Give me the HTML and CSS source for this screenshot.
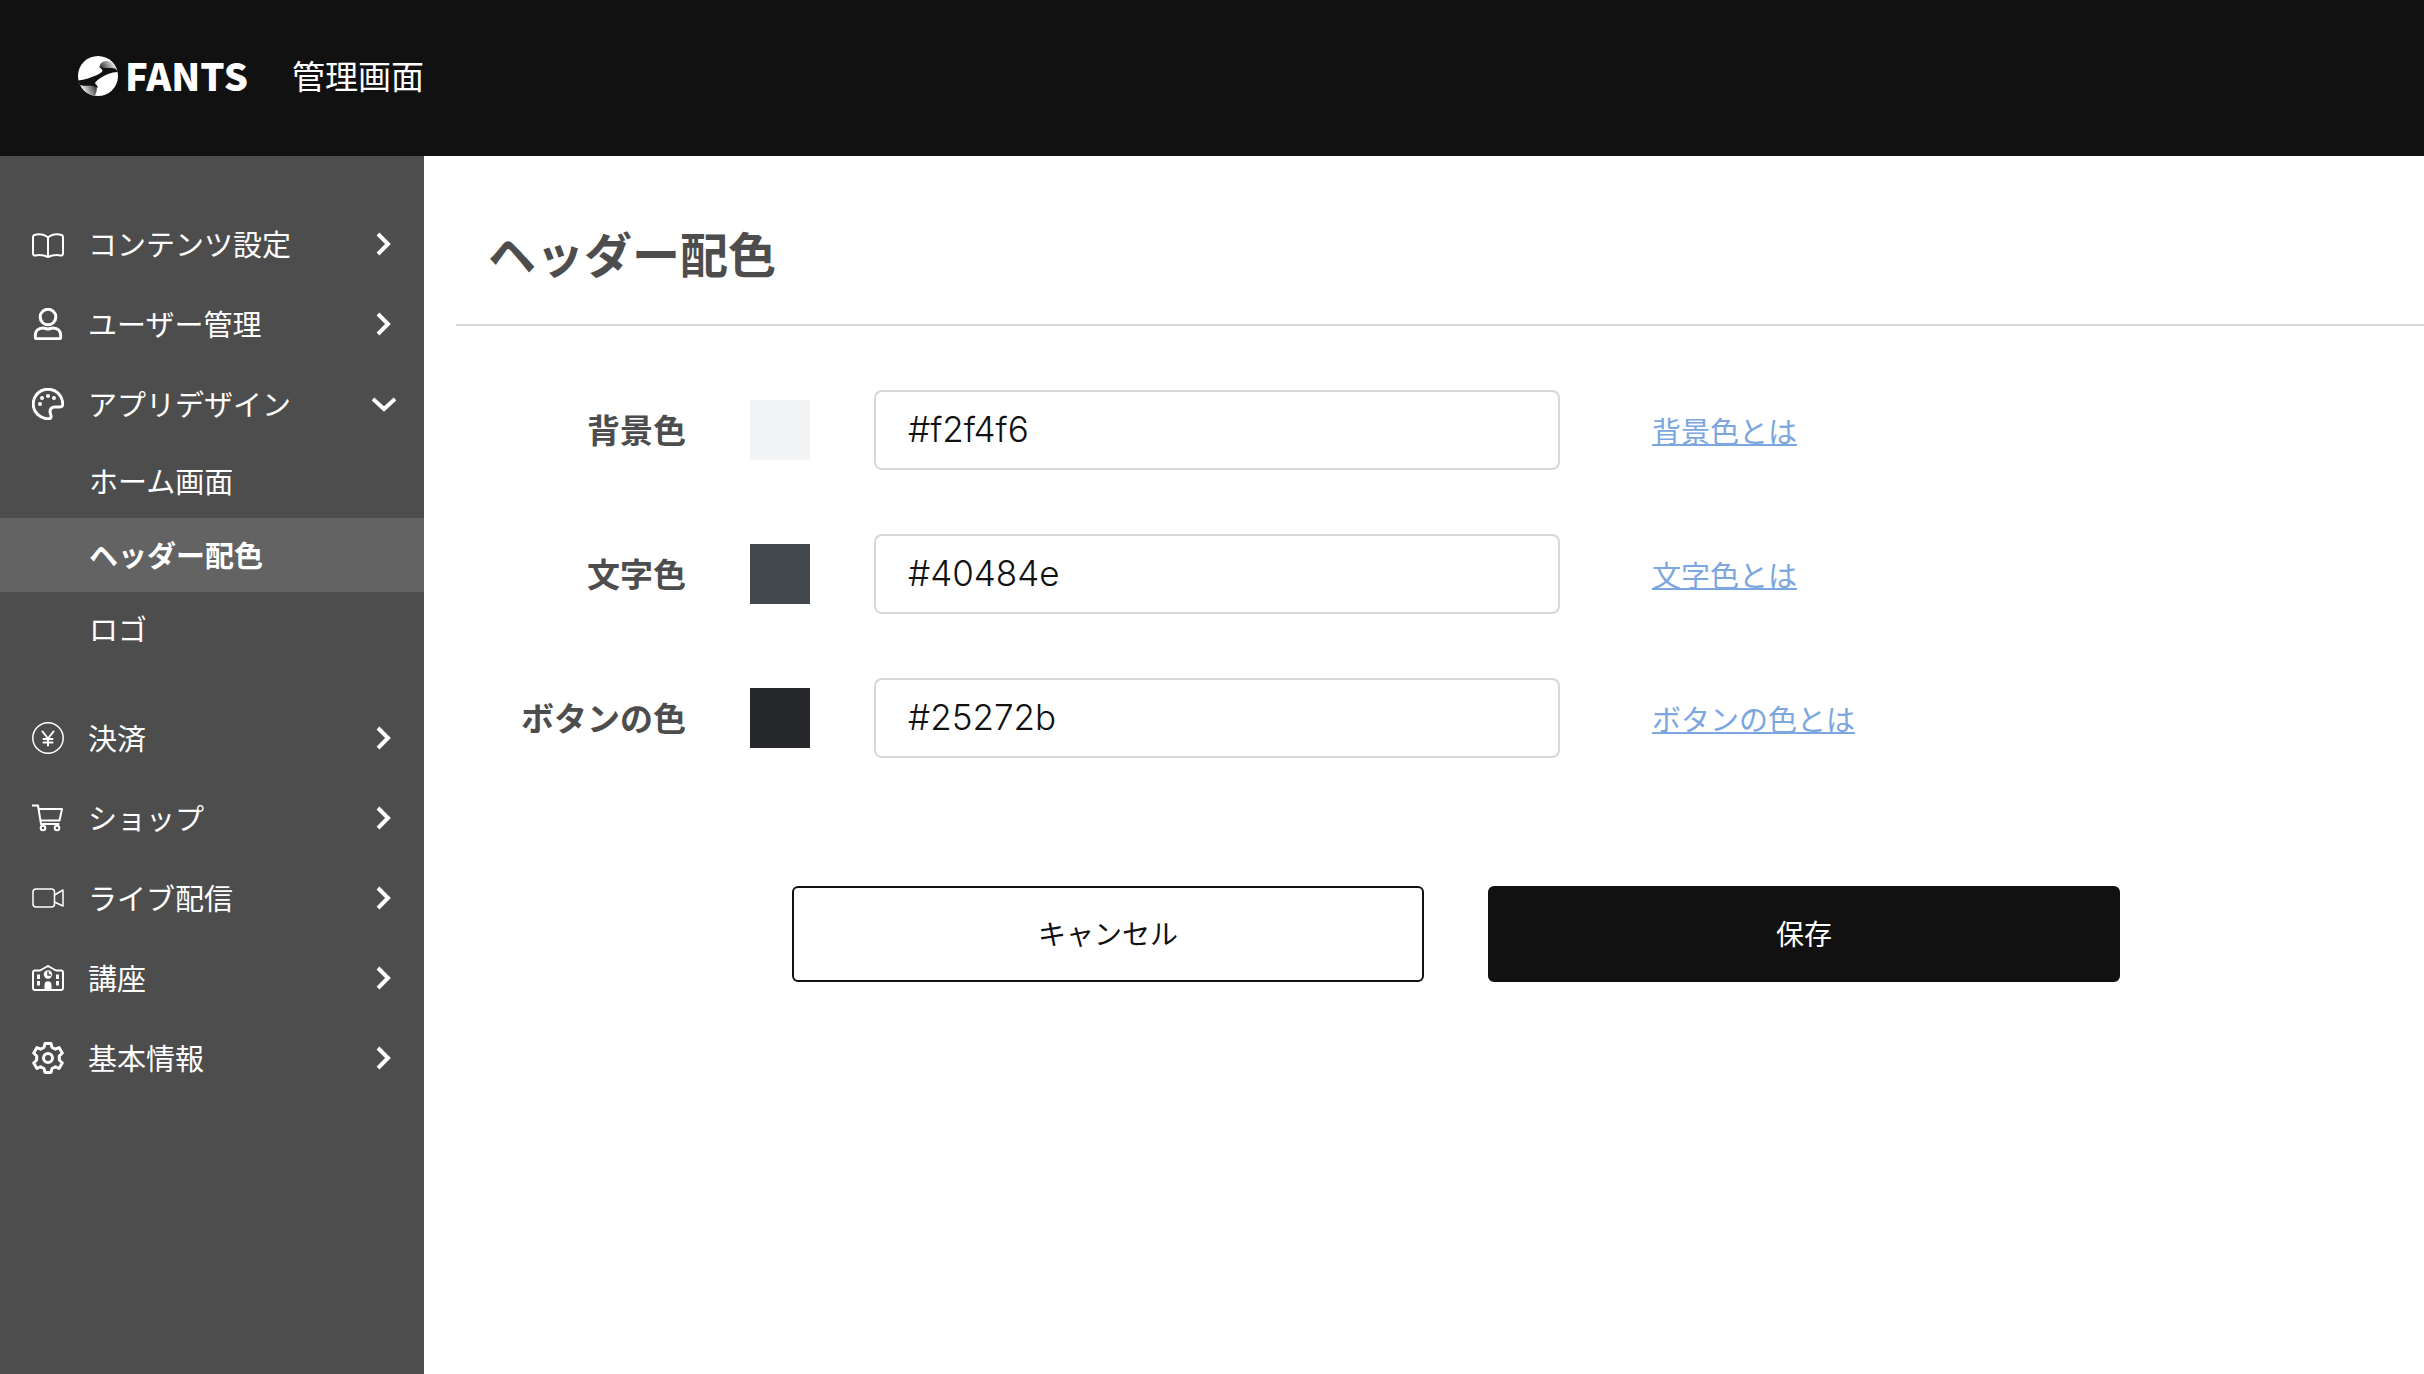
FILE: index.html
```html
<!DOCTYPE html>
<html lang="ja">
<head>
    <meta charset="UTF-8">
    <meta name="viewport" content="width=device-width, initial-scale=1.0">
    <title>ヘッダー配色 | FANTS 管理画面</title>
    <link rel="stylesheet" href="styles.css">
</head>
<body>
    <header class="header">
        <a class="logo" href="#">
            <svg class="logo-mark" viewBox="0 0 40 40" aria-hidden="true">
                <defs>
                    <linearGradient id="fold-top" x1="0" y1="0.6" x2="1" y2="0.3">
                        <stop offset="0" stop-color="#333"/>
                        <stop offset="1" stop-color="#fff"/>
                    </linearGradient>
                    <linearGradient id="fold-bottom" x1="1" y1="0.3" x2="0.1" y2="0.6">
                        <stop offset="0" stop-color="#333"/>
                        <stop offset="1" stop-color="#fff"/>
                    </linearGradient>
                </defs>
                <circle cx="20" cy="20" r="20" fill="#fff"/>
                <path d="M21.500 11C22 7 25 5 29 5C33 5 36 8 38 12C33 12 27 13 24 13Z" fill="url(#fold-top)"/>
                <path d="M2 27C8 29 14 28 18 29C20 33 18 37 17 40C10 39 4 34 2 28Z" fill="url(#fold-bottom)"/>
                <path d="M0 24.500C7 24 13 21.500 19 19C23 17 26 15 23.500 13C22.500 12 21.500 11.500 21.500 10.500C25 13 32 11.500 37.500 12.500L40 16C33 16 27 19 21 23C17 26 16.500 27 18 28.500C19.500 30 20 31 19.500 32C15 28 8 31 2 29Z" fill="#111"/>
            </svg>
            <span class="logo-text">FANTS</span>
        </a>
        <span class="header-title">管理画面</span>
    </header>

    <div class="layout">
        <nav class="sidebar">
            <ul class="menu">
                <li>
                    <a class="menu-item" href="#">
                        <svg class="icon" viewBox="0 0 32 32"><path d="M16 9.500C13 6.500 7 5.500 3 6.800C1.600 7.200 1 8 1 9.500V25.500C1 27 2 27.600 3.500 27.400C8 26.500 12 27 16 29C20 27 24 26.500 28.500 27.400C30 27.600 31 27 31 25.500V9.500C31 8 30.400 7.200 29 6.800C25 5.500 19 6.500 16 9.500V29"/></svg>
                        <span class="menu-label">コンテンツ設定</span>
                        <svg class="arrow" viewBox="0 0 24 24"><path d="M6 2L16 12L6 22"/></svg>
                    </a>
                </li>
                <li>
                    <a class="menu-item" href="#">
                        <svg class="icon icon-bold" viewBox="0 0 32 32"><circle cx="16" cy="9" r="7.800"/><path d="M11 20C6 20 3.300 23 3.300 27.500V29C3.300 30 4 30.800 5 30.800H27C28 30.800 28.700 30 28.700 29V27.500C28.700 23 26 20 21 20C19 20 18 21 16 21C14 21 13 20 11 20Z"/></svg>
                        <span class="menu-label">ユーザー管理</span>
                        <svg class="arrow" viewBox="0 0 24 24"><path d="M6 2L16 12L6 22"/></svg>
                    </a>
                </li>
                <li>
                    <a class="menu-item" href="#">
                        <svg class="icon icon-bold" viewBox="0 0 32 32"><path d="M16 1.200C7.500 1.200 1.200 8 1.200 16C1.200 24 8 30.800 16.500 30.800C19 30.800 19.500 29 18.700 26.500C17 22 19 19 23 19H28C30 19 30.800 18 30.800 16C30.500 7.500 24 1.200 16 1.200Z"/><g class="solid"><circle cx="8" cy="16" r="2"/><circle cx="10" cy="10" r="2"/><circle cx="16" cy="8" r="2"/><circle cx="22" cy="10" r="2"/></g></svg>
                        <span class="menu-label">アプリデザイン</span>
                        <svg class="arrow" viewBox="0 0 24 24"><path d="M1 7L12 17L23 7"/></svg>
                    </a>
                    <ul class="submenu">
                        <li><a class="submenu-item" href="#">ホーム画面</a></li>
                        <li><a class="submenu-item active" href="#">ヘッダー配色</a></li>
                        <li><a class="submenu-item" href="#">ロゴ</a></li>
                    </ul>
                </li>
                <li>
                    <a class="menu-item" href="#">
                        <svg class="icon" viewBox="0 0 32 32"><circle class="thin" cx="16" cy="16" r="15.200"/><path d="M10.500 9.500L16 16.500L21.500 9.500M16 16.500V23.500M11.500 17H20.500M11.500 20.500H20.500"/></svg>
                        <span class="menu-label">決済</span>
                        <svg class="arrow" viewBox="0 0 24 24"><path d="M6 2L16 12L6 22"/></svg>
                    </a>
                </li>
                <li>
                    <a class="menu-item" href="#">
                        <svg class="icon" viewBox="0 0 32 32"><path d="M0 3.500H6L9 22H26.500M6.500 7H30L27.500 18.500H8.500"/><circle cx="11" cy="26" r="2.300"/><circle cx="25" cy="26" r="2.300"/></svg>
                        <span class="menu-label">ショップ</span>
                        <svg class="arrow" viewBox="0 0 24 24"><path d="M6 2L16 12L6 22"/></svg>
                    </a>
                </li>
                <li>
                    <a class="menu-item" href="#">
                        <svg class="icon" viewBox="0 0 32 32"><g class="thin"><rect x="1" y="7" width="21.500" height="18" rx="3"/><path d="M22.500 13L31 8V24L22.500 20"/></g></svg>
                        <span class="menu-label">ライブ配信</span>
                        <svg class="arrow" viewBox="0 0 24 24"><path d="M6 2L16 12L6 22"/></svg>
                    </a>
                </li>
                <li>
                    <a class="menu-item" href="#">
                        <svg class="icon" viewBox="0 0 32 32"><path d="M3 8.500H8L16 4L24 8.500H29C30.300 8.500 31 9.300 31 10.500V26C31 27.300 30.300 28 29 28H3C1.700 28 1 27.300 1 26V10.500C1 9.300 1.700 8.500 3 8.500Z"/><g class="solid"><circle cx="16" cy="12.500" r="4.200"/><path d="M5 12.500H8V17H5ZM5 19H8V23.500H5ZM24 12.500H27V17H24ZM24 19H27V23.500H24ZM12.500 28V22.500C12.500 18 19.500 18 19.500 22.500V28Z"/></g><path class="clock-hand" d="M16 10V13H18.500"/></svg>
                        <span class="menu-label">講座</span>
                        <svg class="arrow" viewBox="0 0 24 24"><path d="M6 2L16 12L6 22"/></svg>
                    </a>
                </li>
                <li>
                    <a class="menu-item" href="#">
                        <svg class="icon icon-bold" viewBox="0 0 32 32"><circle cx="16" cy="16" r="4.500"/><path d="M13 1.500H19L20 5.500L23.500 7.200L27 5.500L30.300 11L27.300 14V18L30.300 21L27 26.500L23.500 24.800L20 26.500L19 30.500H13L12 26.500L8.500 24.800L5 26.500L1.700 21L4.700 18V14L1.700 11L5 5.500L8.500 7.200L12 5.500Z"/></svg>
                        <span class="menu-label">基本情報</span>
                        <svg class="arrow" viewBox="0 0 24 24"><path d="M6 2L16 12L6 22"/></svg>
                    </a>
                </li>
            </ul>
        </nav>

        <main class="main">
            <h1 class="page-title">ヘッダー配色</h1>
            <form class="color-form">
                <div class="form-row">
                    <label class="form-label" for="bg-color">背景色</label>
                    <input class="swatch" type="color" value="#f2f4f6" aria-label="背景色を選択">
                    <input class="color-input" type="text" id="bg-color" value="#f2f4f6">
                    <a class="help-link" href="#">背景色とは</a>
                </div>
                <div class="form-row">
                    <label class="form-label" for="text-color">文字色</label>
                    <input class="swatch" type="color" value="#43474e" aria-label="文字色を選択">
                    <input class="color-input" type="text" id="text-color" value="#40484e">
                    <a class="help-link" href="#">文字色とは</a>
                </div>
                <div class="form-row">
                    <label class="form-label" for="button-color">ボタンの色</label>
                    <input class="swatch" type="color" value="#25272b" aria-label="ボタンの色を選択">
                    <input class="color-input" type="text" id="button-color" value="#25272b">
                    <a class="help-link" href="#">ボタンの色とは</a>
                </div>
                <div class="form-actions">
                    <button class="btn" type="button">キャンセル</button>
                    <button class="btn btn-primary" type="submit">保存</button>
                </div>
            </form>
        </main>
    </div>
</body>
</html>
```
FILE: styles.css
```css
* {
    box-sizing: border-box;
}

body {
    margin: 0;
    min-height: 100vh;
    display: flex;
    flex-direction: column;
    font-family: "Noto Sans CJK JP", sans-serif;
    font-size: 29px;
    color: #111;
    background-color: #fff;
}

a {
    color: inherit;
    text-decoration: none;
}

ul {
    list-style: none;
    margin: 0;
    padding: 0;
}

/* header */
.header {
    display: flex;
    align-items: center;
    gap: 44px;
    height: 156px;
    padding: 0 78px 4px;
    background-color: #111;
    color: #fff;
}

.logo {
    display: flex;
    align-items: center;
    gap: 7px;
}

.logo-mark {
    width: 40px;
    height: 40px;
}

.logo-text {
    padding-bottom: 2px;
    font-size: 38px;
    font-weight: 900;
    line-height: 40px;
}

.header-title {
    padding-bottom: 3px;
    font-size: 33px;
    line-height: 40px;
}

/* sidebar */
.layout {
    display: flex;
    flex: 1;
}

.sidebar {
    flex: 0 0 424px;
    padding: 48px 0;
    background-color: #4d4d4d;
    color: #fff;
}

.menu-item {
    display: flex;
    align-items: center;
    height: 80px;
    padding: 0 28px 0 32px;
}

.menu-label {
    flex: 1;
    margin-left: 24px;
    padding-bottom: 3px;
}

.icon {
    width: 32px;
    height: 32px;
    fill: none;
    stroke: #fff;
    stroke-width: 2;
    stroke-linecap: round;
    stroke-linejoin: round;
}

.icon-bold {
    stroke-width: 3;
}

.icon .thin {
    stroke-width: 1.5;
}

.icon .solid {
    fill: #fff;
    stroke: none;
}

.icon .clock-hand {
    stroke: #4d4d4d;
    stroke-width: 1.5;
}

.arrow {
    width: 24px;
    height: 24px;
    fill: none;
    stroke: #fff;
    stroke-width: 4;
}

.submenu {
    margin-bottom: 32px;
}

.submenu-item {
    display: flex;
    align-items: center;
    height: 74px;
    padding: 0 0 3px 89px;
}

.submenu-item.active {
    background-color: #636363;
    font-weight: bold;
}

/* main */
.main {
    flex: 1;
    padding-left: 32px;
}

.page-title {
    margin: 0;
    padding: 60px 32px 36px;
    border-bottom: 2px solid #d8d8d8;
    font-size: 48px;
    line-height: 72px;
    color: #4d4d4d;
}

.color-form {
    padding: 64px 0 64px 32px;
}

.form-row {
    display: flex;
    align-items: center;
    margin-bottom: 64px;
}

.form-label {
    width: 198px;
    padding-bottom: 3px;
    font-size: 33px;
    font-weight: bold;
    text-align: right;
    color: #4d4d4d;
}

.swatch {
    width: 60px;
    height: 60px;
    margin: 0 64px;
    padding: 0;
    border: none;
    background: none;
    cursor: pointer;
}

.swatch::-webkit-color-swatch-wrapper {
    padding: 0;
}

.swatch::-webkit-color-swatch {
    border: none;
    border-radius: 0;
}

.color-input {
    flex: 0 1 686px;
    min-width: 0;
    height: 80px;
    padding: 0 32px 2px;
    border: 2px solid #d8d8d8;
    border-radius: 8px;
    font-family: Inter, sans-serif;
    font-size: 35px;
    font-weight: 300;
    color: #111;
}

.help-link {
    margin-left: 92px;
    color: #7ba6e0;
    text-decoration: underline;
    text-decoration-thickness: 2px;
}

.form-actions {
    display: flex;
    justify-content: center;
    gap: 64px;
    margin-top: 128px;
}

.btn {
    flex: 0 1 632px;
    height: 96px;
    padding: 0 0 2px;
    border: 2px solid #111;
    border-radius: 6px;
    background-color: #fff;
    font-family: inherit;
    font-size: 28px;
    color: #111;
    cursor: pointer;
}

.btn-primary {
    background-color: #111;
    color: #fff;
}
```
